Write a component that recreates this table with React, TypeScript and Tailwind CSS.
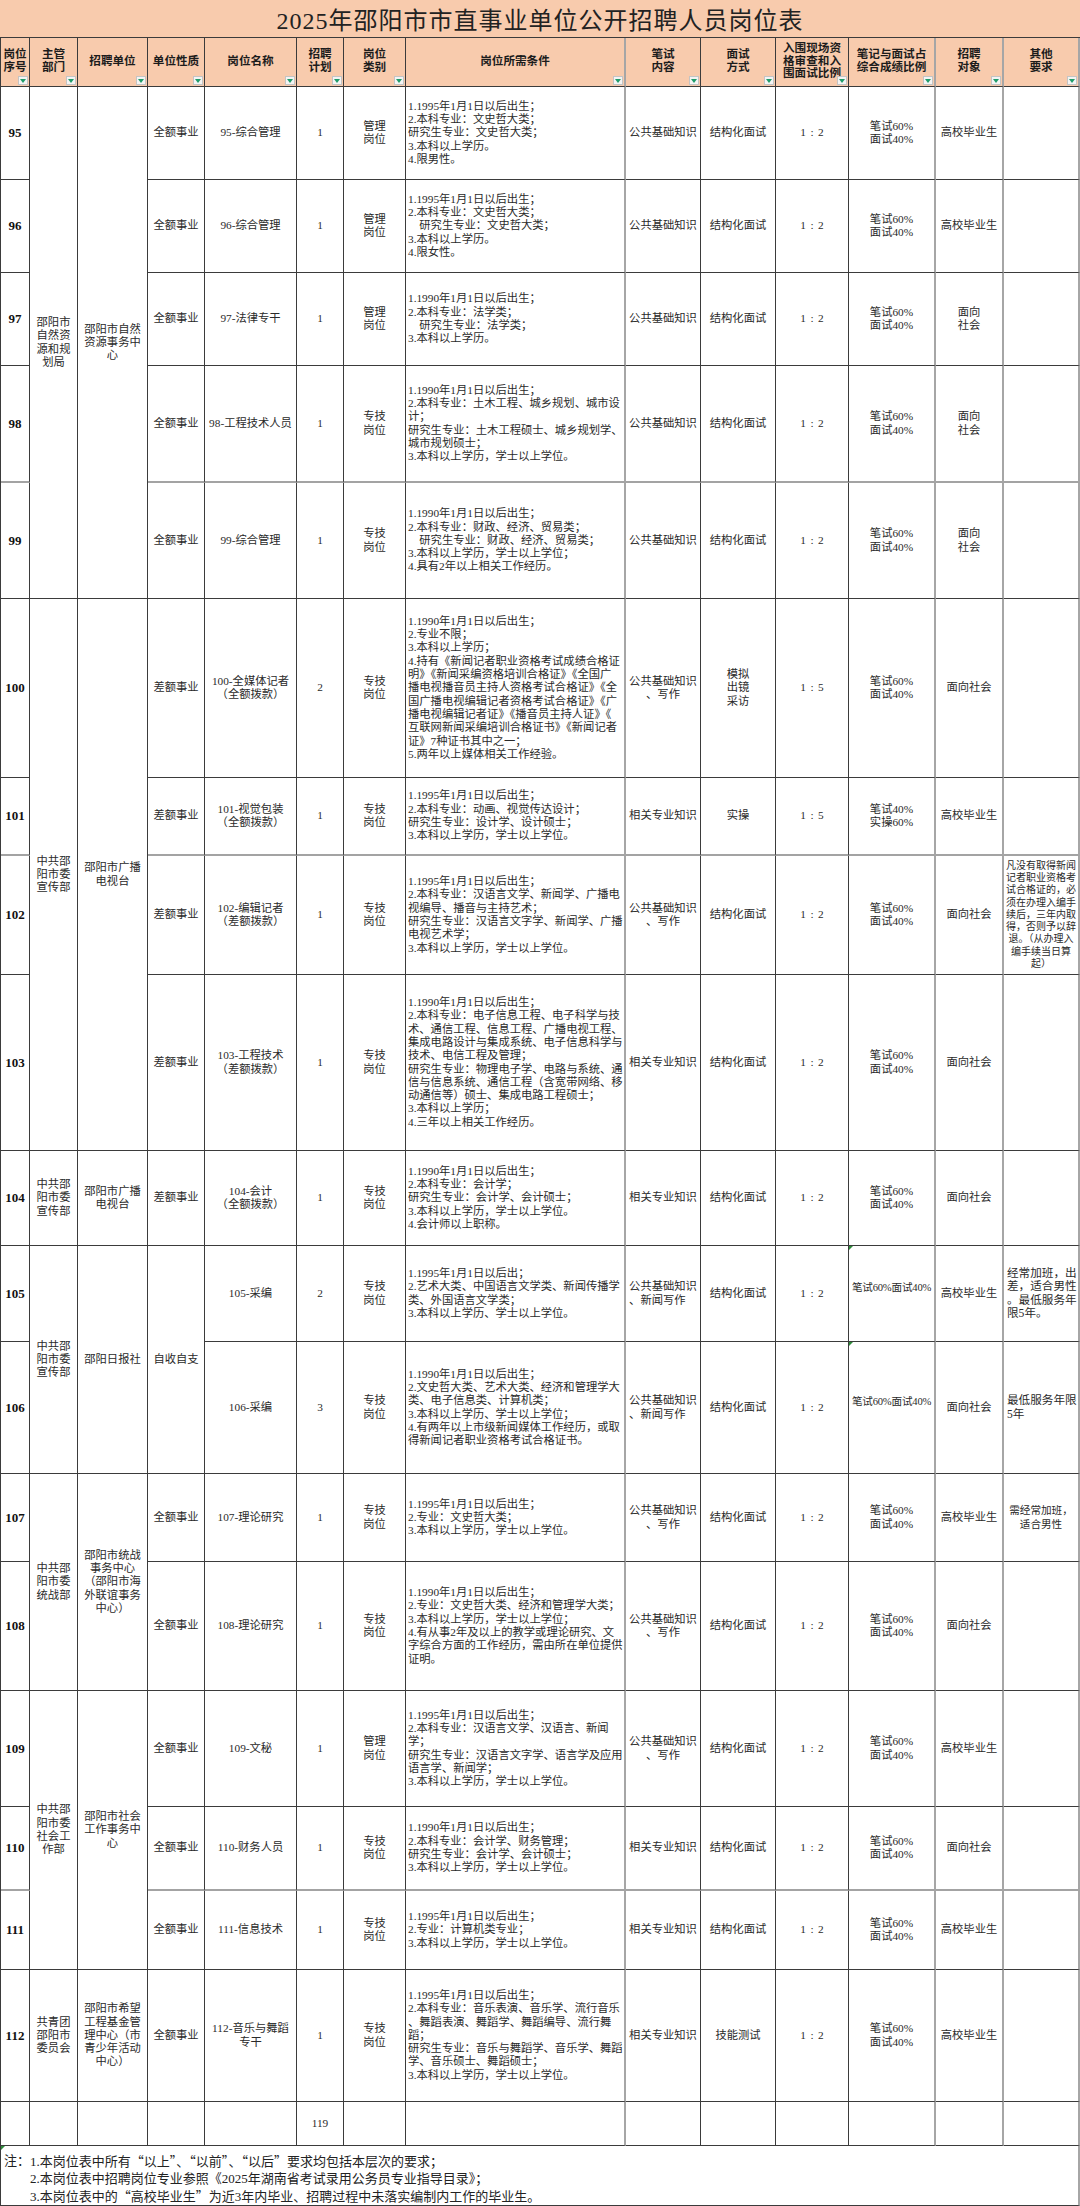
import React from "react";

const F = "font-['Liberation_Serif','Noto_Sans_CJK_SC',serif]";

const SPAN: Record<number, string> = {
  1: "",
  2: "row-span-2",
  3: "row-span-3",
  4: "row-span-4",
  5: "row-span-5",
};
const GRAY_COLS = new Set([8, 12, 13, 14]);

function rb(col: number) {
  return GRAY_COLS.has(col)
    ? "border-r-2 border-r-[#a6a6a6]"
    : "border-r border-r-[#3b3b3b]";
}
function bb(gray?: boolean) {
  return gray ? "border-b-2 border-b-[#a3a3a3]" : "border-b border-b-[#3b3b3b]";
}

function Lines({ t }: { t: string }) {
  return (
    <>
      {t.split("\n").map((s, i) => (
        <div key={i} className="whitespace-pre">
          {s}
        </div>
      ))}
    </>
  );
}

function Cell({
  col,
  span = 1,
  gray,
  left,
  cls = "",
  children,
}: {
  col: number;
  span?: number;
  gray?: boolean;
  left?: boolean;
  cls?: string;
  children?: React.ReactNode;
}) {
  const align = left ? "items-start text-left" : "items-center text-center";
  return (
    <div
      className={`relative flex flex-col justify-center overflow-hidden ${align} ${rb(col)} ${bb(
        gray
      )} ${SPAN[span]} ${cls}`}
    >
      {children}
    </div>
  );
}

function Filter() {
  return (
    <span className="absolute right-[1px] bottom-[1px] flex h-[9px] w-[10px] items-center justify-center border border-[#c4c4c4] bg-[#f4f4f4]">
      <svg width="6" height="4" viewBox="0 0 6 4">
        <path d="M0 0H6L3 4Z" fill="#1f9d6b" />
      </svg>
    </span>
  );
}

function Mark() {
  return (
    <span className="absolute left-0 top-0 h-0 w-0 border-t-[4px] border-r-[4px] border-t-[#2e8b3a] border-r-transparent" />
  );
}

function Ratio({ t }: { t: string }) {
  const [a, b] = t.split("：");
  return (
    <div className="flex items-center whitespace-pre">
      <span>{a}</span>
      <span className="inline-block w-[12px] text-center">:</span>
      <span>{b}</span>
    </div>
  );
}

const HEADERS = [
  "岗位\n序号",
  "主管\n部门",
  "招聘单位",
  "单位性质",
  "岗位名称",
  "招聘\n计划",
  "岗位\n类别",
  "岗位所需条件",
  "笔试\n内容",
  "面试\n方式",
  "入围现场资\n格审查和入\n围面试比例",
  "笔记与面试占\n综合成绩比例",
  "招聘\n对象",
  "其他\n要求",
];

type Other = { t: string; left?: boolean; cls?: string };
type Row = {
  no: string;
  dept?: [string, number];
  org?: [string, number];
  unitM?: [string, number];
  unit?: string;
  name: string;
  plan: string;
  cat: string;
  cond: string;
  exam: string;
  examLeft?: boolean;
  itv: string;
  ratio: string;
  w: string;
  wOne?: boolean;
  tgt: string;
  other?: Other;
  gray?: boolean;
  mark?: boolean;
};

const W = "笔试60%\n面试40%";
const XC = "宣传部";

const ROWS: Row[] = [
  {
    no: "95",
    dept: ["邵阳市\n自然资\n源和规\n划局", 5],
    org: ["邵阳市自然\n资源事务中\n心", 5],
    unit: "全额事业",
    name: "95-综合管理",
    plan: "1",
    cat: "管理\n岗位",
    cond: "1.1995年1月1日以后出生；\n2.本科专业：文史哲大类；\n研究生专业：文史哲大类；\n3.本科以上学历。\n4.限男性。",
    exam: "公共基础知识",
    itv: "结构化面试",
    ratio: "1：2",
    w: W,
    tgt: "高校毕业生",
  },
  {
    no: "96",
    unit: "全额事业",
    name: "96-综合管理",
    plan: "1",
    cat: "管理\n岗位",
    cond: "1.1995年1月1日以后出生；\n2.本科专业：文史哲大类；\n　研究生专业：文史哲大类；\n3.本科以上学历。\n4.限女性。",
    exam: "公共基础知识",
    itv: "结构化面试",
    ratio: "1：2",
    w: W,
    tgt: "高校毕业生",
  },
  {
    no: "97",
    unit: "全额事业",
    name: "97-法律专干",
    plan: "1",
    cat: "管理\n岗位",
    cond: "1.1990年1月1日以后出生；\n2.本科专业：法学类；\n　研究生专业：法学类；\n3.本科以上学历。",
    exam: "公共基础知识",
    itv: "结构化面试",
    ratio: "1：2",
    w: W,
    tgt: "面向\n社会",
  },
  {
    no: "98",
    unit: "全额事业",
    name: "98-工程技术人员",
    plan: "1",
    cat: "专技\n岗位",
    cond: "1.1990年1月1日以后出生；\n2.本科专业：土木工程、城乡规划、城市设\n计；\n研究生专业：土木工程硕士、城乡规划学、\n城市规划硕士；\n3.本科以上学历，学士以上学位。",
    exam: "公共基础知识",
    itv: "结构化面试",
    ratio: "1：2",
    w: W,
    tgt: "面向\n社会",
    gray: true,
  },
  {
    no: "99",
    unit: "全额事业",
    name: "99-综合管理",
    plan: "1",
    cat: "专技\n岗位",
    cond: "1.1990年1月1日以后出生；\n2.本科专业：财政、经济、贸易类；\n　研究生专业：财政、经济、贸易类；\n3.本科以上学历，学士以上学位；\n4.具有2年以上相关工作经历。",
    exam: "公共基础知识",
    itv: "结构化面试",
    ratio: "1：2",
    w: W,
    tgt: "面向\n社会",
  },
  {
    no: "100",
    dept: ["中共邵\n阳市委\n" + XC, 4],
    org: ["邵阳市广播\n电视台", 4],
    unit: "差额事业",
    name: "100-全媒体记者\n（全额拨款）",
    plan: "2",
    cat: "专技\n岗位",
    cond: "1.1990年1月1日以后出生；\n2.专业不限；\n3.本科以上学历；\n4.持有《新闻记者职业资格考试成绩合格证\n明》《新闻采编资格培训合格证》《全国广\n播电视播音员主持人资格考试合格证》《全\n国广播电视编辑记者资格考试合格证》《广\n播电视编辑记者证》《播音员主持人证》《\n互联网新闻采编培训合格证书》《新闻记者\n证》7种证书其中之一；\n5.两年以上媒体相关工作经验。",
    exam: "公共基础知识\n、写作",
    itv: "模拟\n出镜\n采访",
    ratio: "1：5",
    w: W,
    tgt: "面向社会",
  },
  {
    no: "101",
    unit: "差额事业",
    name: "101-视觉包装\n（全额拨款）",
    plan: "1",
    cat: "专技\n岗位",
    cond: "1.1995年1月1日以后出生；\n2.本科专业：动画、视觉传达设计；\n研究生专业：设计学、设计硕士；\n3.本科以上学历，学士以上学位。",
    exam: "相关专业知识",
    itv: "实操",
    ratio: "1：5",
    w: "笔试40%\n实操60%",
    tgt: "高校毕业生",
    gray: true,
  },
  {
    no: "102",
    unit: "差额事业",
    name: "102-编辑记者\n（差额拨款）",
    plan: "1",
    cat: "专技\n岗位",
    cond: "1.1995年1月1日以后出生；\n2.本科专业：汉语言文学、新闻学、广播电\n视编导、播音与主持艺术；\n研究生专业：汉语言文字学、新闻学、广播\n电视艺术学；\n3.本科以上学历，学士以上学位。",
    exam: "公共基础知识\n、写作",
    itv: "结构化面试",
    ratio: "1：2",
    w: W,
    tgt: "面向社会",
    other: {
      t: "凡没有取得新闻\n记者职业资格考\n试合格证的，必\n须在办理入编手\n续后，三年内取\n得，否则予以辞\n退。（从办理入\n编手续当日算\n起）",
      cls: "text-[10px] leading-[12.3px]",
    },
  },
  {
    no: "103",
    unit: "差额事业",
    name: "103-工程技术\n（差额拨款）",
    plan: "1",
    cat: "专技\n岗位",
    cond: "1.1990年1月1日以后出生；\n2.本科专业：电子信息工程、电子科学与技\n术、通信工程、信息工程、广播电视工程、\n集成电路设计与集成系统、电子信息科学与\n技术、电信工程及管理；\n研究生专业：物理电子学、电路与系统、通\n信与信息系统、通信工程（含宽带网络、移\n动通信等）硕士、集成电路工程硕士；\n3.本科以上学历；\n4.三年以上相关工作经历。",
    exam: "相关专业知识",
    itv: "结构化面试",
    ratio: "1：2",
    w: W,
    tgt: "面向社会",
  },
  {
    no: "104",
    dept: ["中共邵\n阳市委\n" + XC, 1],
    org: ["邵阳市广播\n电视台", 1],
    unit: "差额事业",
    name: "104-会计\n（全额拨款）",
    plan: "1",
    cat: "专技\n岗位",
    cond: "1.1990年1月1日以后出生；\n2.本科专业：会计学；\n研究生专业：会计学、会计硕士；\n3.本科以上学历，学士以上学位。\n4.会计师以上职称。",
    exam: "相关专业知识",
    itv: "结构化面试",
    ratio: "1：2",
    w: W,
    tgt: "面向社会",
  },
  {
    no: "105",
    dept: ["中共邵\n阳市委\n" + XC, 2],
    org: ["邵阳日报社", 2],
    unitM: ["自收自支", 2],
    name: "105-采编",
    plan: "2",
    cat: "专技\n岗位",
    cond: "1.1995年1月1日以后出；\n2.艺术大类、中国语言文学类、新闻传播学\n类、外国语言文学类；\n3.本科以上学历、学士以上学位。",
    exam: "公共基础知识\n、新闻写作",
    examLeft: true,
    itv: "结构化面试",
    ratio: "1：2",
    w: "笔试60%面试40%",
    wOne: true,
    mark: true,
    tgt: "高校毕业生",
    other: {
      t: "经常加班，出\n差，适合男性\n。最低服务年\n限5年。",
      left: true,
      cls: "text-[11.6px] leading-[13.3px] pl-[3px]",
    },
  },
  {
    no: "106",
    name: "106-采编",
    plan: "3",
    cat: "专技\n岗位",
    cond: "1.1990年1月1日以后出生；\n2.文史哲大类、艺术大类、经济和管理学大\n类、电子信息类、计算机类；\n3.本科以上学历、学士以上学位；\n4.有两年以上市级新闻媒体工作经历，或取\n得新闻记者职业资格考试合格证书。",
    exam: "公共基础知识\n、新闻写作",
    examLeft: true,
    itv: "结构化面试",
    ratio: "1：2",
    w: "笔试60%面试40%",
    wOne: true,
    mark: true,
    tgt: "面向社会",
    other: {
      t: "最低服务年限\n5年",
      left: true,
      cls: "text-[11.6px] leading-[13.3px] pl-[3px]",
    },
  },
  {
    no: "107",
    dept: ["中共邵\n阳市委\n统战部", 2],
    org: ["邵阳市统战\n事务中心\n（邵阳市海\n外联谊事务\n中心）", 2],
    unit: "全额事业",
    name: "107-理论研究",
    plan: "1",
    cat: "专技\n岗位",
    cond: "1.1995年1月1日以后出生；\n2.专业：文史哲大类；\n3.本科以上学历，学士以上学位。",
    exam: "公共基础知识\n、写作",
    itv: "结构化面试",
    ratio: "1：2",
    w: W,
    tgt: "高校毕业生",
    other: { t: "需经常加班，\n适合男性", cls: "text-[10.6px] leading-[13.3px]" },
  },
  {
    no: "108",
    unit: "全额事业",
    name: "108-理论研究",
    plan: "1",
    cat: "专技\n岗位",
    cond: "1.1990年1月1日以后出生；\n2.专业：文史哲大类、经济和管理学大类；\n3.本科以上学历，学士以上学位；\n4.有从事2年及以上的教学或理论研究、文\n字综合方面的工作经历，需由所在单位提供\n证明。",
    exam: "公共基础知识\n、写作",
    itv: "结构化面试",
    ratio: "1：2",
    w: W,
    tgt: "面向社会",
  },
  {
    no: "109",
    dept: ["中共邵\n阳市委\n社会工\n作部", 3],
    org: ["邵阳市社会\n工作事务中\n心", 3],
    unit: "全额事业",
    name: "109-文秘",
    plan: "1",
    cat: "管理\n岗位",
    cond: "1.1995年1月1日以后出生；\n2.本科专业：汉语言文学、汉语言、新闻\n学；\n研究生专业：汉语言文字学、语言学及应用\n语言学、新闻学；\n3.本科以上学历，学士以上学位。",
    exam: "公共基础知识\n、写作",
    itv: "结构化面试",
    ratio: "1：2",
    w: W,
    tgt: "高校毕业生",
  },
  {
    no: "110",
    unit: "全额事业",
    name: "110-财务人员",
    plan: "1",
    cat: "专技\n岗位",
    cond: "1.1990年1月1日以后出生；\n2.本科专业：会计学、财务管理；\n研究生专业：会计学、会计硕士；\n3.本科以上学历，学士以上学位。",
    exam: "相关专业知识",
    itv: "结构化面试",
    ratio: "1：2",
    w: W,
    tgt: "面向社会",
    gray: true,
  },
  {
    no: "111",
    unit: "全额事业",
    name: "111-信息技术",
    plan: "1",
    cat: "专技\n岗位",
    cond: "1.1995年1月1日以后出生；\n2.专业：计算机类专业；\n3.本科以上学历，学士以上学位。",
    exam: "相关专业知识",
    itv: "结构化面试",
    ratio: "1：2",
    w: W,
    tgt: "高校毕业生",
  },
  {
    no: "112",
    dept: ["共青团\n邵阳市\n委员会", 1],
    org: ["邵阳市希望\n工程基金管\n理中心（市\n青少年活动\n中心）", 1],
    unit: "全额事业",
    name: "112-音乐与舞蹈\n专干",
    plan: "1",
    cat: "专技\n岗位",
    cond: "1.1995年1月1日以后出生；\n2.本科专业：音乐表演、音乐学、流行音乐\n、舞蹈表演、舞蹈学、舞蹈编导、流行舞\n蹈；\n研究生专业：音乐与舞蹈学、音乐学、舞蹈\n学、音乐硕士、舞蹈硕士；\n3.本科以上学历，学士以上学位。",
    exam: "相关专业知识",
    itv: "技能测试",
    ratio: "1：2",
    w: W,
    tgt: "高校毕业生",
  },
];

function Q({ children }: { children: React.ReactNode }) {
  return <span className="font-['Noto_Sans_CJK_SC',sans-serif]">{children}</span>;
}

export default function App() {
  const cells: React.ReactNode[] = [];

  HEADERS.forEach((h, i) =>
    cells.push(
      <div
        key={`h${i}`}
        className={`relative flex flex-col items-center justify-center overflow-hidden bg-[#f8cbad] text-center text-[11.6px] font-bold leading-[12.7px] text-[#1c1c1c] ${rb(
          i + 1
        )} ${bb()}`}
      >
        <Lines t={h} />
        <Filter />
      </div>
    )
  );

  ROWS.forEach((r) => {
    const g = r.gray;
    const k = r.no;
    cells.push(
      <Cell key={k + "a"} col={1} gray={g} cls="text-[13px] font-bold text-[#111]">
        {r.no}
      </Cell>
    );
    if (r.dept)
      cells.push(
        <Cell key={k + "b"} col={2} span={r.dept[1]}>
          <Lines t={r.dept[0]} />
        </Cell>
      );
    if (r.org)
      cells.push(
        <Cell key={k + "c"} col={3} span={r.org[1]}>
          <Lines t={r.org[0]} />
        </Cell>
      );
    if (r.unitM)
      cells.push(
        <Cell key={k + "d"} col={4} span={r.unitM[1]}>
          <Lines t={r.unitM[0]} />
        </Cell>
      );
    if (r.unit)
      cells.push(
        <Cell key={k + "d"} col={4} gray={g}>
          {r.unit}
        </Cell>
      );
    cells.push(
      <Cell key={k + "e"} col={5} gray={g}>
        <Lines t={r.name} />
      </Cell>
    );
    cells.push(
      <Cell key={k + "f"} col={6} gray={g}>
        {r.plan}
      </Cell>
    );
    cells.push(
      <Cell key={k + "g"} col={7} gray={g}>
        <Lines t={r.cat} />
      </Cell>
    );
    cells.push(
      <Cell key={k + "h"} col={8} gray={g} left cls="pl-[2px]">
        <Lines t={r.cond} />
      </Cell>
    );
    cells.push(
      <Cell key={k + "i"} col={9} gray={g}>
        {r.examLeft ? (
          <div className="text-left">
            <Lines t={r.exam} />
          </div>
        ) : (
          <Lines t={r.exam} />
        )}
      </Cell>
    );
    cells.push(
      <Cell key={k + "j"} col={10} gray={g}>
        <Lines t={r.itv} />
      </Cell>
    );
    cells.push(
      <Cell key={k + "k"} col={11} gray={g}>
        <Ratio t={r.ratio} />
      </Cell>
    );
    cells.push(
      <Cell key={k + "l"} col={12} gray={g} cls={r.wOne ? "pb-[12px] text-[10.6px] tracking-[-0.2px]" : ""}>
        {r.mark && <Mark />}
        <Lines t={r.w} />
      </Cell>
    );
    cells.push(
      <Cell key={k + "m"} col={13} gray={g}>
        <Lines t={r.tgt} />
      </Cell>
    );
    cells.push(
      <Cell key={k + "n"} col={14} gray={g} left={r.other?.left} cls={r.other?.cls ?? ""}>
        {r.other && <Lines t={r.other.t} />}
      </Cell>
    );
  });

  for (let c = 1; c <= 14; c++) {
    cells.push(
      <Cell key={`t${c}`} col={c}>
        {c === 6 ? "119" : ""}
      </Cell>
    );
  }

  return (
    <div className={`h-[2206px] w-[1080px] overflow-hidden bg-white ${F} text-[11.3px] leading-[13.3px] text-[#2a2a2a]`}>
      <div className="flex h-[37px] w-[1080px] items-center justify-center bg-[#f8cbad] pt-[5px] text-[24px] leading-[28px] tracking-[1px] text-[#222]">
        2025年邵阳市市直事业单位公开招聘人员岗位表
      </div>
      <div className="grid w-[1080px] grid-cols-[29px_48px_70px_57px_92px_47px_62px_220px_75px_75px_73px_87px_68px_76px] grid-rows-[49px_93px_93px_93px_117px_116px_179px_78px_119px_176px_95px_96px_132px_88px_129px_116px_84px_79px_132px_44px] border-l border-t border-l-[#3b3b3b] border-t-[#3b3b3b]">
        {cells}
      </div>
      <div className="relative flex h-[60px] w-[1080px] border-b border-l border-r-2 border-b-[#3b3b3b] border-l-[#3b3b3b] border-r-[#a6a6a6] pl-[3px] pt-[6px] text-[13px] leading-[17px] text-[#222]">
        <Mark />
        <div className="w-[26px] shrink-0 whitespace-pre">注：</div>
        <div className="flex flex-col">
          <div className="whitespace-pre">
            1.本岗位表中所有<Q>“</Q>以上<Q>”</Q>、<Q>“</Q>以前<Q>”</Q>、<Q>“</Q>以后<Q>”</Q>要求均包括本层次的要求；
          </div>
          <div className="whitespace-pre">2.本岗位表中招聘岗位专业参照《2025年湖南省考试录用公务员专业指导目录》；</div>
          <div className="whitespace-pre">
            3.本岗位表中的<Q>“</Q>高校毕业生<Q>”</Q>为近3年内毕业、招聘过程中未落实编制内工作的毕业生。
          </div>
        </div>
      </div>
    </div>
  );
}
